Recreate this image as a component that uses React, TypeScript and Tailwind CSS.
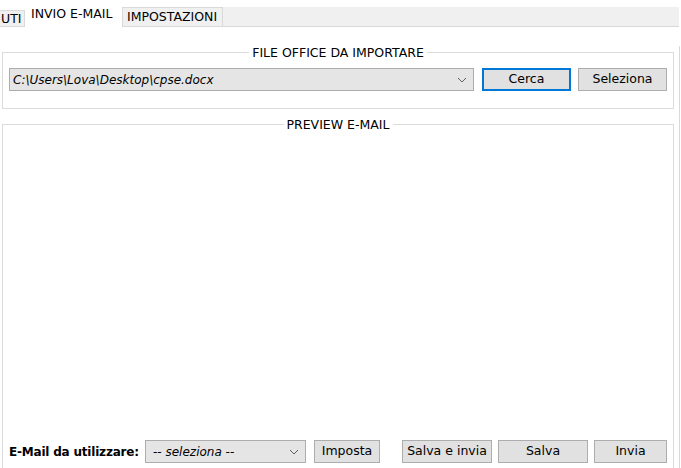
import React from "react";

const font = { fontFamily: '"DejaVu Sans", Tahoma, sans-serif' };

function Btn({ label, w, focused }: { label: string; w: string; focused?: boolean }) {
  return (
    <button
      className={`${w} h-[23px] bg-[#e1e1e1] text-[#000] text-[12.5px] leading-none flex items-center justify-center ${
        focused ? "border-2 border-[#0078d7]" : "border border-[#adadad]"
      }`}
    >
      {label}
    </button>
  );
}

function Chevron() {
  return (
    <svg width="10" height="6" viewBox="0 0 10 6" className="shrink-0">
      <path d="M1 1 L5 5 L9 1" fill="none" stroke="#606060" strokeWidth="1" />
    </svg>
  );
}

export default function App() {
  return (
    <div className="w-[681px] h-[468px] bg-white overflow-hidden text-black" style={font}>
      {/* tab header */}
      <div className="flex h-[27px] items-stretch">
        <div className="w-[25px] mt-[10px] bg-[#f0f0f0] border border-l-0 border-[#d9d9d9] text-[12.5px] leading-none pt-[2px] pl-[1px]">
          UTI
        </div>
        <div className="w-[97px] pl-[6px] pt-[8px] text-[12.5px] leading-none bg-white">INVIO E-MAIL</div>
        <div className="w-[101px] mt-[7px] h-[20px] bg-[#f0f0f0] border border-[#d9d9d9] text-[12.5px] leading-none pl-[4px] pt-[3px]">
          IMPOSTAZIONI
        </div>
        <div className="w-[456px] mt-[7px] bg-[#f0f0f0] border-b border-[#d9d9d9]" />
      </div>
      {/* pane */}
      <div className="w-[680px] border-r border-[#d9d9d9] h-[441px]">
        <fieldset className="ml-[2px] w-[672px] mt-[19px] border border-[#dcdcdc] px-[6px] pt-[9px] pb-[17px]">
          <legend className="mx-auto px-[3px] text-[12.5px] leading-[13px]">FILE OFFICE DA IMPORTARE</legend>
          <div className="flex items-center">
            <div className="w-[465px] h-[23px] bg-[#e5e5e5] border border-[#adadad] flex items-center pl-[3px] pr-[6px]">
              <span className="flex-1 italic text-[12px] leading-none">C:\Users\Lova\Desktop\cpse.docx</span>
              <Chevron />
            </div>
            <div className="ml-[8px]">
              <Btn label="Cerca" w="w-[89px]" focused />
            </div>
            <div className="ml-[7px]">
              <Btn label="Seleziona" w="w-[89px]" />
            </div>
          </div>
        </fieldset>
        <fieldset className="ml-[2px] w-[672px] mt-[9px] border border-[#dcdcdc] px-[6px] pt-[0px] pb-[20px] flex flex-col">
          <legend className="mx-auto px-[3px] text-[12.5px] leading-[13px]">PREVIEW E-MAIL</legend>
          <div className="h-[309px]" />
          <div className="flex items-center">
            <span className="font-bold text-[12px] leading-none w-[136px] whitespace-nowrap tracking-[-0.2px]">
              E-Mail da utilizzare:
            </span>
            <div className="w-[161px] h-[23px] bg-[#e5e5e5] border border-[#adadad] flex items-center pl-[7px] pr-[6px]">
              <span className="flex-1 italic text-[12px] leading-none">-- seleziona --</span>
              <Chevron />
            </div>
            <div className="ml-[8px]">
              <Btn label="Imposta" w="w-[66px]" />
            </div>
            <div className="ml-[22px]">
              <Btn label="Salva e invia" w="w-[90px]" />
            </div>
            <div className="ml-[6px]">
              <Btn label="Salva" w="w-[90px]" />
            </div>
            <div className="ml-[6px]">
              <Btn label="Invia" w="w-[73px]" />
            </div>
          </div>
        </fieldset>
      </div>
    </div>
  );
}
